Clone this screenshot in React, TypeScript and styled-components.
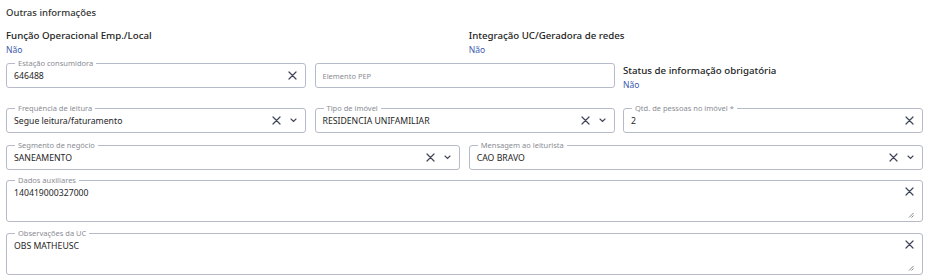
import styled, { createGlobalStyle } from "styled-components";

const GlobalStyle = createGlobalStyle`
  body {
    margin: 0;
    background: #fff;
    font-family: "Noto Sans", "Open Sans", sans-serif;
  }
`;

const Page = styled.div`
  width: 931px;
  padding: 6px 8px 0 6px;
  box-sizing: border-box;
`;

const Title = styled.h4`
  margin: 0;
  font-size: 9.5px;
  line-height: 14px;
  font-weight: 500;
  color: #333;
`;

const Row = styled.div<{ $cols: number; $top: number }>`
  display: grid;
  grid-template-columns: repeat(${(p) => p.$cols}, 1fr);
  align-items: start;
  column-gap: 8.5px;
  margin-top: ${(p) => p.$top}px;
`;

const Info = styled.div<{ $pad?: number }>`
  display: flex;
  flex-direction: column;
  padding-top: ${(p) => p.$pad ?? 0}px;
`;

const InfoLabel = styled.span`
  font-size: 9.7px;
  line-height: 14px;
  font-weight: 500;
  color: #222;
`;

const InfoValue = styled.span`
  font-size: 8.5px;
  line-height: 13px;
  color: #3d5aae;
`;

const Box = styled.div<{ $tall?: boolean }>`
  position: relative;
  box-sizing: border-box;
  height: ${(p) => (p.$tall ? 42 : 25)}px;
  border: 1px solid #b7bbc9;
  border-radius: 3px;
  display: flex;
  align-items: ${(p) => (p.$tall ? "flex-start" : "center")};
  padding: ${(p) => (p.$tall ? "6px 8px 3px 7px" : "0 8px 0 7px")};
  gap: 9px;
`;

const Legend = styled.span`
  position: absolute;
  top: -5px;
  left: 8px;
  padding: 0 3px;
  background: #fff;
  font-size: 7.5px;
  line-height: 9px;
  color: #8a8c94;
`;

const Value = styled.span<{ $placeholder?: boolean }>`
  flex: 1;
  font-size: ${(p) => (p.$placeholder ? 7.5 : 8.7)}px;
  line-height: 12px;
  color: ${(p) => (p.$placeholder ? "#8a8c94" : "#262626")};
`;

const IconCol = styled.div`
  align-self: stretch;
  display: flex;
  flex-direction: column;
  justify-content: space-between;
  align-items: flex-end;
`;

const IconWrap = styled.span`
  display: flex;
  align-items: center;
`;

const ClearIcon = () => (
  <IconWrap>
    <svg width="9" height="9" viewBox="0 0 9 9">
      <path d="M1 1L8 8M8 1L1 8" stroke="#3f4458" strokeWidth="1.2" strokeLinecap="round" />
    </svg>
  </IconWrap>
);

const ChevronIcon = () => (
  <IconWrap>
    <svg width="7" height="5" viewBox="0 0 7 5">
      <path d="M1 1L3.5 3.5L6 1" stroke="#3f4458" strokeWidth="1.1" fill="none" strokeLinecap="round" />
    </svg>
  </IconWrap>
);

const GripIcon = () => (
  <svg width="6" height="6" viewBox="0 0 6 6">
    <path d="M1 5.5L5.5 1M3.5 5.5L5.5 3.5" stroke="#666" strokeWidth="0.8" />
  </svg>
);

type FieldProps = {
  label?: string;
  value?: string;
  placeholder?: string;
  select?: boolean;
  clear?: boolean;
};

function Field({ label, value, placeholder, select, clear }: FieldProps) {
  return (
    <Box>
      {label && <Legend>{label}</Legend>}
      {value ? <Value>{value}</Value> : <Value $placeholder>{placeholder}</Value>}
      {clear && <ClearIcon />}
      {select && <ChevronIcon />}
    </Box>
  );
}

function TextArea({ label, value }: { label: string; value: string }) {
  return (
    <Box $tall>
      <Legend>{label}</Legend>
      <Value>{value}</Value>
      <IconCol>
        <ClearIcon />
        <GripIcon />
      </IconCol>
    </Box>
  );
}

function Full({ children, top }: { children: React.ReactNode; top: number }) {
  return (
    <Row $cols={1} $top={top}>
      {children}
    </Row>
  );
}

export default function App() {
  return (
    <>
      <GlobalStyle />
      <Page>
        <Title>Outras informações</Title>
        <Row $cols={2} $top={9}>
          <Info>
            <InfoLabel>Função Operacional Emp./Local</InfoLabel>
            <InfoValue>Não</InfoValue>
          </Info>
          <Info>
            <InfoLabel>Integração UC/Geradora de redes</InfoLabel>
            <InfoValue>Não</InfoValue>
          </Info>
        </Row>
        <Row $cols={3} $top={7}>
          <Field label="Estação consumidora" value="646488" clear />
          <Field placeholder="Elemento PEP" />
          <Info $pad={1}>
            <InfoLabel>Status de informação obrigatória</InfoLabel>
            <InfoValue>Não</InfoValue>
          </Info>
        </Row>
        <Row $cols={3} $top={17}>
          <Field label="Frequência de leitura" value="Segue leitura/faturamento" clear select />
          <Field label="Tipo de imóvel" value="RESIDENCIA UNIFAMILIAR" clear select />
          <Field label="Qtd. de pessoas no imóvel *" value="2" clear />
        </Row>
        <Row $cols={2} $top={12}>
          <Field label="Segmento de negócio" value="SANEAMENTO" clear select />
          <Field label="Mensagem ao leiturista" value="CAO BRAVO" clear select />
        </Row>
        <Full top={10}>
          <TextArea label="Dados auxiliares" value="140419000327000" />
        </Full>
        <Full top={11}>
          <TextArea label="Observações da UC" value="OBS MATHEUSC" />
        </Full>
      </Page>
    </>
  );
}
